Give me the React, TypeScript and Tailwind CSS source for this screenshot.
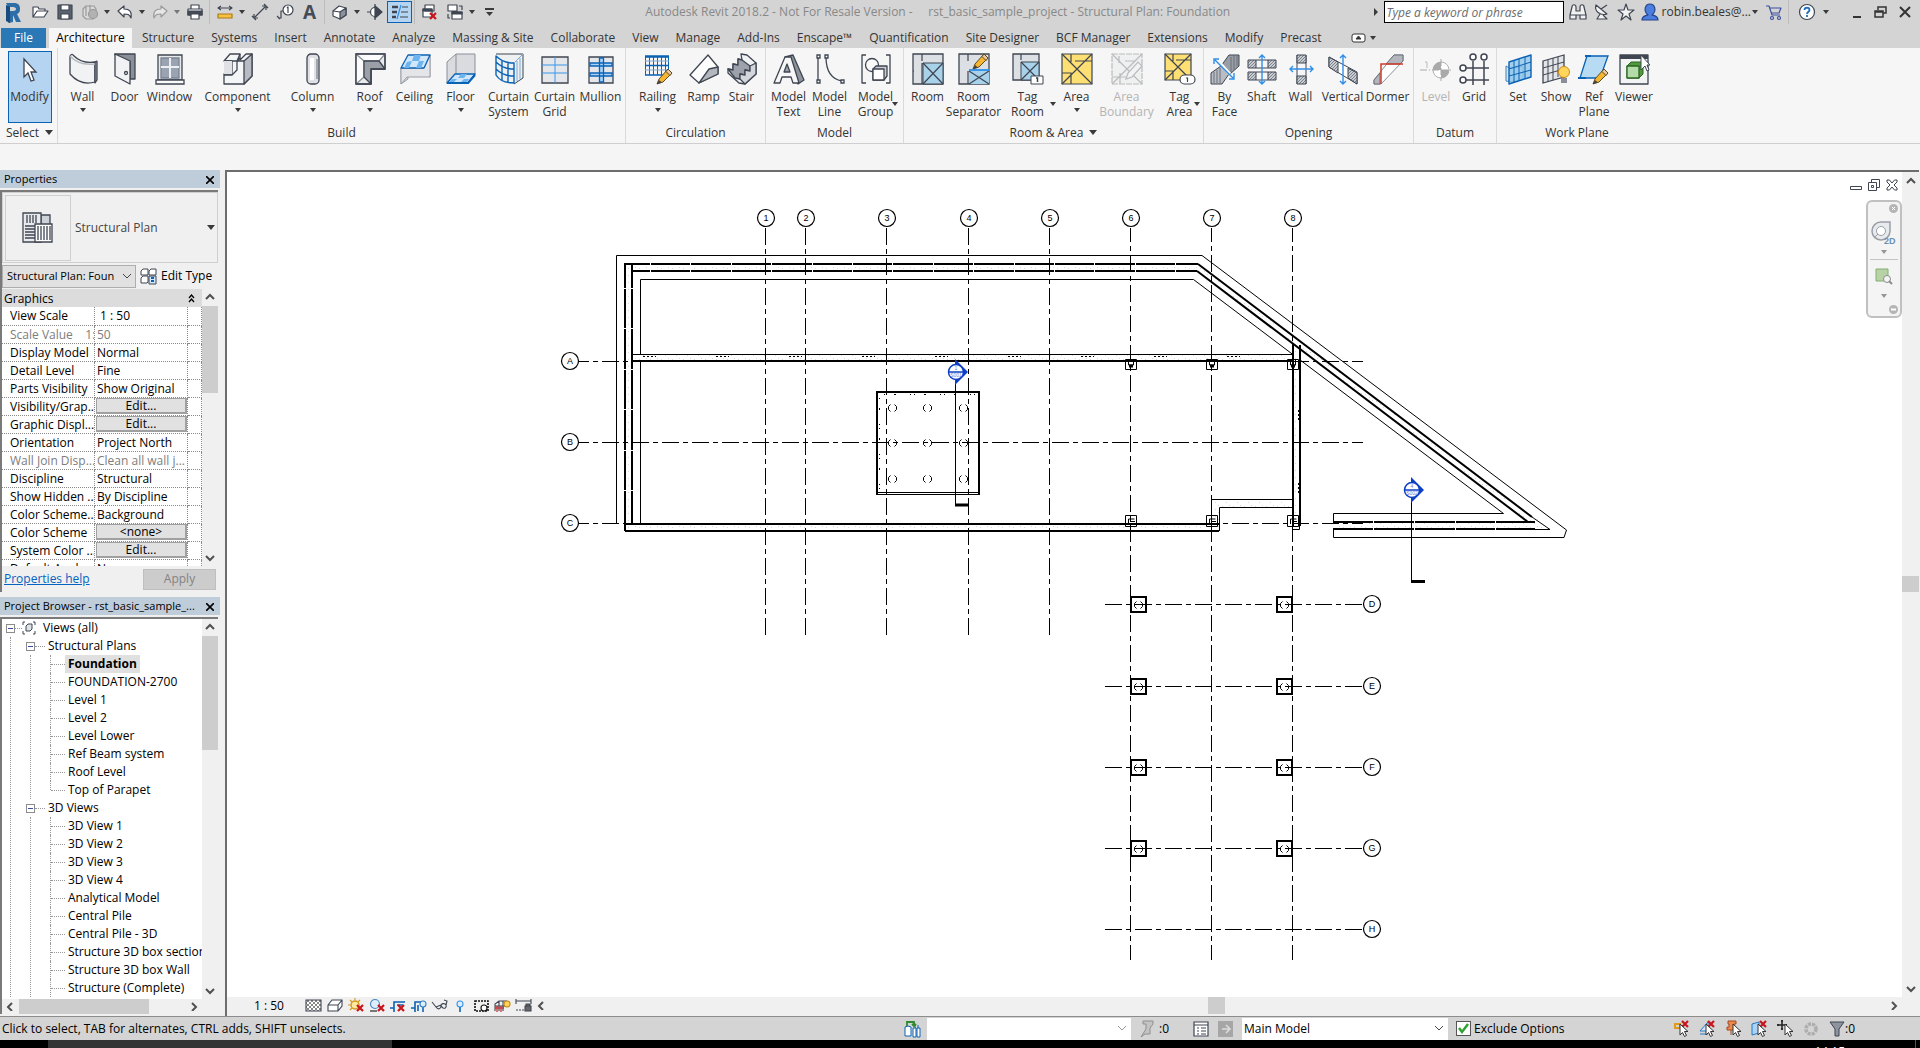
import React, { useState } from "react";

const INK = "#3f4652";
const BLUE = "#0a62b5";

// ---------- shared bits ----------

const Caret = ({ className = "" }: { className?: string }) => (
  <svg width="6" height="4" className={`fill-[#3a3a3a] ${className}`}>
    <path d="M0 0h6L3 4z" />
  </svg>
);

const WideCaret = () => (
  <svg width="8" height="5" className="fill-[#3a3a3a]">
    <path d="M0 0h8L4 5z" />
  </svg>
);

const Chevron = ({ dir }: { dir: "up" | "down" | "left" | "right" }) => {
  const d = {
    up: "M1 6l4-4 4 4",
    down: "M1 3l4 4 4-4",
    left: "M6 1L2 5l4 4",
    right: "M3 1l4 4-4 4",
  }[dir];
  return (
    <svg width="10" height="9" fill="none" stroke="#505050" strokeWidth="2">
      <path d={d} />
    </svg>
  );
};

const Pencil = ({ x, y }: { x: number; y: number }) => (
  <g transform={`translate(${x} ${y})`}>
    <path d="M0 15l2-5L11 0l4 4-9 9z" fill="#f6b52e" stroke="#5d4a22" />
    <path d="M9 2.500l4 4 2-2.500-4-4z" fill="#e9c7a0" stroke="#5d4a22" />
    <path d="M0 15l2-4 3 2.500z" fill="#444" />
  </g>
);

const RedCross = ({ x, y }: { x: number; y: number }) => (
  <path d={`M${x} ${y}l6 6m0-6l-6 6`} stroke="#c8141b" strokeWidth="2.200" />
);

const Cursor = ({ x, y }: { x: number; y: number }) => (
  <path
    transform={`translate(${x} ${y})`}
    d="M0 0v11l2.500-2.500 2 4 2-1-2-4H8z"
    fill="#fff"
    stroke="#333"
  />
);

const Hatched = ({ d }: { d: string }) => (
  <path d={d} fill="url(#hatch)" stroke={INK} />
);

// ---------- ribbon icons, 32x32 ----------

const icons: Record<string, React.ReactNode> = {
  modify: <path d="M10 6v18l4-4 3 8 3-1-3-8h5z" fill="#fff" stroke={INK} strokeWidth="1.300" />,
  wall: (
    <g stroke={INK} strokeWidth="1.300" strokeLinejoin="round">
      <path d="M3 3c2-3 3-1 4 0 6 6 14 7 21 6v20c-10 3-18 0-25-8z" fill="#f1f2f4" />
      <path d="M28 9c2-1 2-1 2 0v18l-2 3z" fill="#a9adb3" />
      <path d="M3 3c6 7 15 9 25 8" fill="none" stroke="#b5b8bd" />
    </g>
  ),
  door: (
    <g stroke={INK} strokeWidth="1.300" strokeLinejoin="round">
      <path d="M6 1h20v25h-5V9L6 2z" fill="#8b9098" />
      <path d="M6 1l15 7v23L6 23z" fill="#f1f2f4" />
      <circle cx="17" cy="20" r="1.500" fill="#fff" />
    </g>
  ),
  window: (
    <g stroke={INK} strokeWidth="1.300">
      <path d="M4 2h24v25H4z" fill="#e6e8ea" />
      <path d="M7 5h18v20H7z" fill="#9aa3b1" stroke="#7b8492" />
      <path d="M16 5v20M7 14h18" stroke="#eceef1" strokeWidth="2" />
      <path d="M2 27h28v4H2z" fill="#fbfbfb" />
    </g>
  ),
  component: (
    <g stroke={INK} strokeWidth="1.300" strokeLinejoin="round">
      <path d="M2 8l6-7h10v6l6-6h6v22l-8 8H2V21h8V8z" fill="#f4f5f6" />
      <path d="M22 31V8l8-7v22z" fill="#b8bcc2" />
      <path d="M2 8h13l3-3M15 8v9l-5 5H2M15 8h7M18 1l-3 7" fill="none" />
      <path d="M2 8h8v13H2z" fill="#dfe1e4" stroke="none" />
    </g>
  ),
  column: (
    <g>
      <rect x="10" y="1" width="12" height="30" rx="4" fill="#dfe1e4" stroke={INK} strokeWidth="1.300" />
      <path d="M15 5v22" stroke="#fff" strokeWidth="4" />
      <path d="M20 6v20" stroke="#a2a6ad" strokeWidth="2" />
    </g>
  ),
  roof: (
    <g stroke={INK} strokeWidth="1.300" strokeLinejoin="round">
      <path d="M2 1h29v15H17v15H2z" fill="#e9eaec" />
      <path d="M2 1l8 7v16l-8 7zM10 8h15l6-7H2z" fill="#fbfbfb" stroke="#8a8f97" />
      <path d="M10 24l7 7V16h14l-6-8H10z" fill="#9ba0a8" />
      <path d="M2 1h29v15H17v15H2z" fill="none" />
    </g>
  ),
  ceiling: (
    <g strokeLinejoin="round">
      <path d="M2 15v16l7-5V16l22 8V2" fill="#d5d8dc" stroke="#9a9ea5" />
      <path d="M2 15h23l6-13v22H8l-6 7z" fill="#e3e5e8" stroke="#9a9ea5" />
      <path d="M9 2h22l-6 13H2z" fill="#cfe6fb" stroke={BLUE} strokeWidth="1.300" />
      <path d="M15 2h7l-2 6h-7zM13 8l-3 7H5l3-6zM25 8l-3 7h-5l3-7z" fill="#6db3ee" />
    </g>
  ),
  floor: (
    <g strokeLinejoin="round">
      <path d="M2 9l9-8h19v21H10l-8 8z" fill="#d9dbde" stroke="#8b9098" />
      <path d="M11 1v20" stroke="#8b9098" />
      <path d="M10 21h20l-7 9H2z" fill="#cfe6fb" stroke={BLUE} strokeWidth="1.300" />
      <path d="M16 21h6l-3 4h-6zM12 26l-4 4H3l4-4zM24 26l-3 4h-6l4-4z" fill="#6db3ee" />
      <path d="M2 30h21l7-8" fill="none" stroke={BLUE} strokeWidth="2" />
    </g>
  ),
  curtainSystem: (
    <g fill="none" strokeLinejoin="round">
      <path d="M3 1h27v24l-9 6c-10 0-16-3-18-8z" fill="#eef0f2" />
      <path d="M3 1h27v24l-9 6" stroke={INK} />
      <path d="M3 3c6 6 12 7 18 7v20C12 30 6 27 3 22zM9 7v20M15 9v21M3 9c6 6 12 7 18 7M3 16c6 6 12 7 18 7" stroke={BLUE} strokeWidth="1.400" />
      <path d="M21 10l9-9M24 8v20M27 5v21" stroke="#7da9d6" />
    </g>
  ),
  curtainGrid: (
    <g fill="none">
      <path d="M3 4h26v26H3z" fill="#e4e6e9" stroke={INK} strokeWidth="1.300" />
      <path d="M16 4v26M3 12h26M3 20h26" stroke="#3b97ea" />
    </g>
  ),
  mullion: (
    <g>
      <path d="M4 4h24v26H4z" fill="#e4e6e9" stroke={INK} strokeWidth="1.300" />
      <path d="M5 10h22v3H5zM5 20h22v3H5zM14.500 5h4v24h-4z" fill="#a9d4f8" stroke={BLUE} strokeWidth="1.300" />
    </g>
  ),
  railing: (
    <g>
      <path d="M3 3.500h24" stroke={BLUE} strokeWidth="2.500" />
      <path d="M3 12.500h24M3 22h24" stroke={BLUE} strokeWidth="1.500" />
      <path d="M3.500 3v19M7.500 3v19M11.500 3v19M15.500 3v19M19.500 3v19M23.500 3v19M26.500 3v19" stroke={BLUE} />
      <path d="M3 8h24M3 17h24" stroke="#7da9d6" />
      <Pencil x={15} y={16} />
    </g>
  ),
  ramp: (
    <g stroke={INK} strokeWidth="1.300" strokeLinejoin="round">
      <path d="M2 22L20 2l10 12v7L11 30z" fill="#fdfdfd" />
      <path d="M11 30l10-14 9-2v7z" fill="#b3b7bd" />
    </g>
  ),
  stair: (
    <g stroke={INK} strokeWidth="1.300" strokeLinejoin="round">
      <path d="M15 1l6 1 9 8v11L19 31l-6-1-11-10v-4l5 1v-6l5 1V6l4 1z" fill="#f1f2f4" />
      <path d="M16 7l8 6v5l-5-1v5l-5-1v5l-5-1-7-9 5 1v-6l5 1V6z" fill="#9da2aa" />
      <path d="M24 13l6-3v11L19 31l-5-5v-5l5 1v-5l5 1z" fill="#d3d6da" />
    </g>
  ),
  modelText: (
    <g stroke={INK} strokeWidth="1.300" strokeLinejoin="round">
      <path d="M12 4l8-2 11 25-6 4-9-15z" fill="#8f949c" />
      <path d="M12 4h6l8 26h-6l-2-6H9l-2 6H1z" fill="#f7f7f8" />
      <path d="M14 11l-3 8h6z" fill="#9da2aa" />
    </g>
  ),
  modelLine: (
    <g fill="none" stroke={INK} strokeWidth="1.300">
      <path d="M4 4v24M12 4c0 14 5 22 16 24" />
      <path d="M3 2h3v3H3zM3 27h3v3H3zM11 2h3v3h-3zM27 27h3v3h-3z" fill="#fff" />
    </g>
  ),
  modelGroup: (
    <g stroke={INK} strokeWidth="1.300" strokeLinejoin="round">
      <path d="M6 2H2v28h4M26 2h4v28h-4" fill="none" />
      <circle cx="12" cy="12" r="6.500" fill="#fafafa" />
      <path d="M13 16l3-3h11v10l-3 4H13z" fill="#c8cbcf" />
      <path d="M13 16h11v11H13z" fill="#fff" />
    </g>
  ),
  room: (
    <g>
      <path d="M1 1h30v30H1z" fill="#dcdfe3" stroke={INK} strokeWidth="1.300" />
      <path d="M11 10h20v21H11z" fill="#a7d2ea" stroke={INK} />
      <path d="M10 1v7M1 18h1M10 10v21M11 10l20 21M31 10L11 31" stroke={INK} strokeWidth="1.200" />
    </g>
  ),
  roomSeparator: (
    <g>
      <path d="M1 1h30v30H1z" fill="#dcdfe3" stroke={INK} strokeWidth="1.300" />
      <path d="M11 18h20v13H11z" fill="#a7d2ea" />
      <path d="M10 1v7M10 18v13M11 18l20 13M31 18L11 31" stroke={INK} strokeWidth="1.200" />
      <path d="M11 17h20" stroke="#3b97ea" strokeWidth="2" />
      <Pencil x={15} y={1} />
    </g>
  ),
  tagRoom: (
    <g>
      <path d="M1 1h26v26H1z" fill="#dcdfe3" stroke={INK} strokeWidth="1.300" />
      <path d="M9 9h18v18H9z" fill="#a7d2ea" stroke={INK} />
      <path d="M9 1v6M9 9l18 18M27 9L9 27" stroke={INK} strokeWidth="1.200" />
      <path d="M19 23h12v8H19z" fill="#fff" stroke={INK} />
      <path d="M24 25h1.500v4" stroke={INK} strokeWidth="1.500" fill="none" />
    </g>
  ),
  area: (
    <g stroke={INK} strokeWidth="1.200">
      <path d="M1 1h30v30H1z" fill="#fddf73" />
      <path d="M1 1l30 30M31 1L1 31M10 1v8M1 20h9v11M14 8h17" fill="none" />
    </g>
  ),
  areaBoundary: (
    <g stroke="#b9bbbe" strokeWidth="1.200">
      <path d="M1 1h30v30H1z" fill="#eff0f0" strokeDasharray="6 1" />
      <path d="M1 1l30 30M31 1L1 31M8 3v7M1 24h14M9 20v11M14 8h10" fill="none" />
      <path d="M15 26l2-6 10-11 4 4-10 11z" fill="#f3f3f3" />
    </g>
  ),
  tagArea: (
    <g stroke={INK} strokeWidth="1.200">
      <path d="M1 1h26v26H1z" fill="#fddf73" />
      <path d="M1 1l26 26M27 1L1 27M9 1v7M1 18h8v9M12 7h15" fill="none" />
      <rect x="16" y="22" width="15" height="9" rx="4.500" fill="#fff" />
      <path d="M22 25h1.500v4" fill="none" />
    </g>
  ),
  byFace: (
    <g>
      <path d="M20 2h10v11L20 22l-8-9z" fill="#999ea6" stroke={INK} />
      <path d="M2 31V20l10-7 8 8-7 10z" fill="#b9bdc3" stroke={INK} />
      <path d="M22 4v15M25 3v14M28 3v10M5 19v11M8 17v13M11 15v15" stroke="#6a707a" />
      <path d="M11 12l9 10 2-2-9-10z" fill="#fff" />
      <path d="M6 7l18 18M5 11V6h5M25 20v6h-5" stroke="#2f8fe8" strokeWidth="1.400" fill="none" />
    </g>
  ),
  shaft: (
    <g>
      <Hatched d="M2 7h8v8H2zM22 7h8v8h-8zM2 19h8v8H2zM22 19h8v8h-8z" />
      <path d="M10 7h12M10 15h12M10 19h12M10 27h12" stroke={INK} />
      <path d="M16 2v29M13 5l3-3 3 3M13 28l3 3 3-3" stroke="#2f8fe8" strokeWidth="1.400" fill="none" />
    </g>
  ),
  wallOpening: (
    <g>
      <path d="M12 2v29M21 2v29" stroke={INK} />
      <Hatched d="M12 2h9v8h-9zM12 23h9v8h-9z" />
      <path d="M5 16h23M8 13l-3 3 3 3M25 13l3 3-3 3" stroke="#2f8fe8" strokeWidth="1.400" fill="none" />
    </g>
  ),
  vertical: (
    <g>
      <path d="M2 4l28 15v12L2 14z" fill="#fff" stroke={INK} />
      <Hatched d="M2 4l9 5v11l-9-6z" />
      <Hatched d="M21 15l9 5v11l-9-6z" />
      <path d="M16 2v29M13 5l3-3 3 3M13 28l3 3 3-3" stroke="#2f8fe8" strokeWidth="1.400" fill="none" />
    </g>
  ),
  dormer: (
    <g>
      <path d="M22 2h9v6L9 31H2v-4z" fill="#fff" stroke="#8a8f97" />
      <path d="M22 2h9v6l-3 3H14zM2 27l6-7v11H2z" fill="#b3b7bd" stroke="#6a707a" />
      <path d="M9 31V11h22" stroke="#d03a2b" strokeWidth="1.500" fill="none" />
    </g>
  ),
  level: (
    <g>
      <circle cx="21" cy="17" r="8" fill="#fff" stroke="#b0b0b0" />
      <path d="M21 17V9a8 8 0 00-8 8zM21 17v8a8 8 0 008-8z" fill="#aaa" />
      <path d="M0 17h10M12 17h19M21 6v22" stroke="#aaa" strokeDasharray="7 2" />
      <path d="M5 9h2v6" stroke="#bbb" fill="none" />
    </g>
  ),
  grid: (
    <g fill="#fff" stroke={INK} strokeWidth="1.500">
      <path d="M15 8v24M26 8v24M8 15h23M8 27h23" />
      <circle cx="15" cy="4" r="3" />
      <circle cx="26" cy="4" r="3" />
      <circle cx="5" cy="15" r="3" />
      <circle cx="5" cy="27" r="3" />
    </g>
  ),
  set: (
    <g fill="none" strokeLinejoin="round">
      <path d="M4 13c4 3 12 2 17 0v13c-5 3-13 3-17 2z" fill="#cfe6f5" stroke="#4680b5" />
      <path d="M7 9l22-7v22L7 31z" fill="#8fc6ea" fillOpacity="0.8" stroke={BLUE} strokeWidth="1.400" />
      <path d="M12 8v22M17 6v22M23 4v22M7 16l22-7M7 23l22-6" stroke={BLUE} />
    </g>
  ),
  show: (
    <g fill="none">
      <path d="M3 8l21-6v22L3 30z" fill="#e3e5e8" stroke={INK} strokeWidth="1.300" />
      <path d="M8 7v22M13 5v22M18 4v20M3 15l21-6M3 22l21-6" stroke={INK} />
      <circle cx="24" cy="19" r="5.500" fill="#ffd659" stroke="#c88a1a" />
      <path d="M21 25h6v5h-6z" fill="#8a8f97" />
    </g>
  ),
  refPlane: (
    <g>
      <path d="M9 3h21l-8 22H2z" fill="#b7dbf3" stroke={BLUE} strokeWidth="1.300" />
      <path d="M0 25h8M7 3h6" stroke={BLUE} strokeWidth="2" />
      <Pencil x={15} y={16} />
    </g>
  ),
  viewer: (
    <g strokeLinejoin="round">
      <path d="M2 2h28v29H2z" fill="#f2f3f4" stroke={INK} strokeWidth="1.300" />
      <path d="M2 2h28v4H2z" fill={INK} />
      <path d="M9 13l4-4h12v12l-4 4H9z" fill="#4e9a3d" stroke="#2b6420" />
      <path d="M9 13h12v12H9z" fill="#b4dca8" stroke="#2b6420" strokeWidth="1.300" />
      <path d="M23 2v15l4-4 2 5 2-1-2-5h3z" fill="#fff" stroke={INK} />
    </g>
  ),
};

type Tool = {
  icon: string;
  label: string[];
  width: string;
  arrow?: "below" | "side";
  disabled?: boolean;
};

const panels: {
  title: string;
  arrow?: boolean;
  width: string;
  tools: Tool[];
}[] = [
  {
    title: "Build",
    width: "w-[568px]",
    tools: [
      { icon: "wall", label: ["Wall"], width: "w-12", arrow: "below" },
      { icon: "door", label: ["Door"], width: "w-9" },
      { icon: "window", label: ["Window"], width: "w-[54px]" },
      { icon: "component", label: ["Component"], width: "w-[82px]", arrow: "below" },
      { icon: "column", label: ["Column"], width: "w-[68px]", arrow: "below" },
      { icon: "roof", label: ["Roof"], width: "w-[46px]", arrow: "below" },
      { icon: "ceiling", label: ["Ceiling"], width: "w-11" },
      { icon: "floor", label: ["Floor"], width: "w-12", arrow: "below" },
      { icon: "curtainSystem", label: ["Curtain", "System"], width: "w-12" },
      { icon: "curtainGrid", label: ["Curtain", "Grid"], width: "w-11" },
      { icon: "mullion", label: ["Mullion"], width: "w-12" },
    ],
  },
  {
    title: "Circulation",
    width: "w-[140px]",
    tools: [
      { icon: "railing", label: ["Railing"], width: "w-11", arrow: "below" },
      { icon: "ramp", label: ["Ramp"], width: "w-12" },
      { icon: "stair", label: ["Stair"], width: "w-7" },
    ],
  },
  {
    title: "Model",
    width: "w-[138px]",
    tools: [
      { icon: "modelText", label: ["Model", "Text"], width: "w-[38px]" },
      { icon: "modelLine", label: ["Model", "Line"], width: "w-11" },
      { icon: "modelGroup", label: ["Model", "Group"], width: "w-12", arrow: "side" },
    ],
  },
  {
    title: "Room & Area",
    arrow: true,
    width: "w-[300px]",
    tools: [
      { icon: "room", label: ["Room"], width: "w-11" },
      { icon: "roomSeparator", label: ["Room", "Separator"], width: "w-12" },
      { icon: "tagRoom", label: ["Tag", "Room"], width: "w-[60px]", arrow: "side" },
      { icon: "area", label: ["Area"], width: "w-[38px]", arrow: "below" },
      { icon: "areaBoundary", label: ["Area", "Boundary"], width: "w-[62px]", disabled: true },
      { icon: "tagArea", label: ["Tag", "Area"], width: "w-11", arrow: "side" },
    ],
  },
  {
    title: "Opening",
    width: "w-[210px]",
    tools: [
      { icon: "byFace", label: ["By", "Face"], width: "w-[38px]" },
      { icon: "shaft", label: ["Shaft"], width: "w-9" },
      { icon: "wallOpening", label: ["Wall"], width: "w-[42px]" },
      { icon: "vertical", label: ["Vertical"], width: "w-[42px]" },
      { icon: "dormer", label: ["Dormer"], width: "w-12" },
    ],
  },
  {
    title: "Datum",
    width: "w-[83px]",
    tools: [
      { icon: "level", label: ["Level"], width: "w-[38px]", disabled: true },
      { icon: "grid", label: ["Grid"], width: "w-[38px]" },
    ],
  },
  {
    title: "Work Plane",
    width: "w-[160px]",
    tools: [
      { icon: "set", label: ["Set"], width: "w-[38px]" },
      { icon: "show", label: ["Show"], width: "w-[38px]" },
      { icon: "refPlane", label: ["Ref", "Plane"], width: "w-[38px]" },
      { icon: "viewer", label: ["Viewer"], width: "w-[42px]" },
    ],
  },
];

const ToolButton = ({ tool }: { tool: Tool }) => (
  <button
    disabled={tool.disabled}
    className={`relative flex h-[72px] shrink-0 flex-col items-center pt-[2px] leading-[15px] whitespace-nowrap ${tool.width} ${
      tool.disabled ? "text-[#b4b4b4]" : "text-[#333]"
    }`}
  >
    <svg width="32" height="32" fill="none">
      {icons[tool.icon]}
    </svg>
    <span className="mt-1 flex flex-col items-center">
      {tool.label.map((line) => (
        <span key={line}>{line}</span>
      ))}
    </span>
    {tool.arrow === "below" && <Caret className="mt-1" />}
    {tool.arrow === "side" && <Caret className="absolute right-[2px] bottom-[17px]" />}
  </button>
);

// ---------- title bar ----------

const Small = ({ children }: { children: React.ReactNode }) => (
  <svg width="18" height="18" fill="none" stroke={INK} strokeWidth="1.200" strokeLinejoin="round">
    {children}
  </svg>
);

const Divider = () => <span className="mx-[2px] h-6 w-px bg-[#bcbcbc]" />;

const QuickButton = ({
  label,
  narrow,
  active,
  children,
}: {
  label: string;
  narrow?: boolean;
  active?: boolean;
  children: React.ReactNode;
}) => (
  <button
    aria-label={label}
    className={`flex h-[22px] shrink-0 items-center justify-center ${
      narrow ? "w-[10px]" : "w-[25px]"
    } ${active ? "border border-[#0a62b5] bg-[#b5d4f1]" : ""}`}
  >
    {children}
  </button>
);

const QuickAccess = () => (
  <div className="flex items-center">
    <QuickButton label="Revit">
      <svg width="16" height="21">
        <path d="M1 1h8c4 0 6 2 6 6 0 3-1 4-3 5l4 8h-5l-3-7v7l-4 1-1-1V5z" fill="#2d6da8" />
        <path d="M5 5h3c2 0 3 1 3 2s-1 2-3 2H5z" fill="#d4d4d4" />
        <path d="M1 3l4 2v16l-4-2z" fill="#174b7d" />
      </svg>
    </QuickButton>
    <span className="w-[2px]" />
    <QuickButton label="Open">
      <Small>
        <path d="M2 14V4h5l1 2h6v2M2 14l4-6h11l-4 6z" fill="#fff" />
      </Small>
    </QuickButton>
    <QuickButton label="Save">
      <Small>
        <path d="M2 2h14v14H2z" fill="#5a6270" />
        <path d="M5 2h8v5H5zM5 11h8v5H5z" fill="#fff" />
      </Small>
    </QuickButton>
    <QuickButton label="Synchronize">
      <Small>
        <g stroke="#9a9a9a">
          <path d="M2 6l3-3h8l2 3v7l-3 3H5l-3-3z" fill="#d9d9d9" />
          <circle cx="12" cy="11" r="4.500" fill="#b2b2b2" />
          <path d="M5 3v10M9 2v6" />
        </g>
      </Small>
    </QuickButton>
    <QuickButton label="Synchronize options" narrow><Caret /></QuickButton>
    <QuickButton label="Undo">
      <Small>
        <path d="M2 8l6-5v3c6 0 8 3 7 9-2-4-3-4-7-4v3z" fill="#fff" />
      </Small>
    </QuickButton>
    <QuickButton label="Undo list" narrow><Caret /></QuickButton>
    <QuickButton label="Redo">
      <Small>
        <path d="M16 8l-6-5v3c-6 0-8 3-7 9 2-4 3-4 7-4v3z" fill="#e6e6e6" stroke="#9a9a9a" />
      </Small>
    </QuickButton>
    <QuickButton label="Redo list" narrow><Caret className="opacity-60" /></QuickButton>
    <QuickButton label="Print">
      <Small>
        <path d="M5 6V2h8v4M2 6h14v6H2z" fill="#fff" />
        <path d="M2 8h14v4H2z" fill="#444b57" />
        <path d="M5 11h8v5H5z" fill="#fff" />
      </Small>
    </QuickButton>
    <Divider />
    <QuickButton label="Measure">
      <Small>
        <path d="M2 5h14M5 3L2 5l3 2M13 3l3 2-3 2" />
        <path d="M2 11h14v4H2z" fill="#f4c243" stroke="#b07a10" />
      </Small>
    </QuickButton>
    <QuickButton label="Measure options" narrow><Caret /></QuickButton>
    <QuickButton label="Aligned dimension">
      <Small>
        <path d="M4 14L14 4M3 11v4h4M11 3h4v4M1 13l4 4M13 1l4 4" />
      </Small>
    </QuickButton>
    <QuickButton label="Tag by category">
      <Small>
        <path d="M2 15h3V8h4M1 13l3 3" />
        <circle cx="12" cy="7" r="5" fill="#fff" />
        <path d="M11 5l1-1v6" />
      </Small>
    </QuickButton>
    <QuickButton label="Text">
      <span className="text-[19px] leading-5 font-bold text-[#454b56]">A</span>
    </QuickButton>
    <Divider />
    <QuickButton label="Default 3D view">
      <Small>
        <path d="M2 8l6-5 7 2v7l-6 4-7-3z" fill="#fff" />
        <path d="M9 9l6-4v7l-6 4z" fill="#8b919b" />
        <path d="M2 8l7 1" />
      </Small>
    </QuickButton>
    <QuickButton label="3D view list" narrow><Caret /></QuickButton>
    <QuickButton label="Section">
      <Small>
        <path d="M9 1v3M9 14v3M1 9h3" />
        <circle cx="9" cy="9" r="4.500" fill="#fff" />
        <path d="M9 3l7 6-7 6z" fill={INK} />
      </Small>
    </QuickButton>
    <QuickButton label="Thin lines" active>
      <Small>
        <path d="M1 4h6M1 9h5M1 14h4" strokeWidth="2.400" />
        <path d="M11 4h6M10 9h7M9 14h8" />
        <path d="M10 2L6 16" stroke="#2f8fe8" />
      </Small>
    </QuickButton>
    <Divider />
    <QuickButton label="Close hidden windows">
      <Small>
        <path d="M4 2h9v6H4zM2 6h9v8H2z" fill="#fff" />
        <path d="M2 6h9v2H2z" fill={INK} />
        <RedCross x={9} y={10} />
      </Small>
    </QuickButton>
    <QuickButton label="Switch windows">
      <Small>
        <path d="M2 2h9v6H2zM6 9h10v7H6z" fill="#fff" />
        <path d="M6 9h10v2H6z" fill={INK} />
        <path d="M13 3h3v4M2 11v4h2" />
      </Small>
    </QuickButton>
    <QuickButton label="Window list" narrow><Caret /></QuickButton>
    <QuickButton label="Customize quick access">
      <svg width="9" height="9" fill="#3a3a3a">
        <path d="M0 0h9v2H0zM1 4h7L4.500 8z" />
      </svg>
    </QuickButton>
  </div>
);

const InfoCenter = () => (
  <div className="flex items-center pr-[3px] text-[#333]">
    <svg width="5" height="8" className="mr-[5px] fill-[#3a3a3a]"><path d="M0 0l4 4-4 4z" /></svg>
    <input
      aria-label="Search help"
      placeholder="Type a keyword or phrase"
      className="mr-[2px] h-[22px] w-[180px] border border-black bg-white px-[2px] italic outline-none placeholder:text-[#6b6b6b]"
    />
    <button aria-label="Search" className="flex w-6 justify-center">
      <Small>
        <path d="M3 4c0-3 4-3 4 0v4h4V4c0-3 4-3 4 0l2 8H1zM1 12h6v4H1zM11 12h6v4h-6z" fill="#f2f2f2" />
      </Small>
    </button>
    <button aria-label="Subscription center" className="flex w-6 justify-center">
      <Small>
        <path d="M3 2c-2 6 4 11 11 9zM8 6l6-4M7 11l-3 5h10l-4-4" fill="#f2f2f2" />
      </Small>
    </button>
    <button aria-label="Favorites" className="flex w-6 justify-center">
      <Small>
        <path d="M9 1l2 6h6l-5 4 2 6-5-4-5 4 2-6-5-4h6z" fill="#f2f2f2" />
      </Small>
    </button>
    <button className="flex items-center">
      <span className="flex w-6 justify-center">
        <Small>
          <path d="M1 17c0-4 3-4 6-5-5-4-3-11 2-11s7 7 2 11c3 1 6 1 6 5z" fill="#4a7fe0" stroke="#26428b" />
        </Small>
      </span>
      <span className="whitespace-nowrap">robin.beales@...</span>
      <Caret className="mr-1 ml-px" />
    </button>
    <button aria-label="App store" className="flex w-6 justify-center">
      <Small>
        <path d="M1 3h3l3 9h8M5 5h11l-2 5H6" stroke="#3c4fa0" />
        <circle cx="7" cy="15" r="1.500" stroke="#3c4fa0" />
        <circle cx="14" cy="15" r="1.500" stroke="#3c4fa0" />
      </Small>
    </button>
    <Divider />
    <button aria-label="Help" className="flex w-8 justify-center">
      <svg width="18" height="18" fill="none">
        <circle cx="9" cy="9" r="7.500" fill="#fff" stroke={INK} strokeWidth="1.200" />
        <path d="M6.500 7c0-3 5-3 5 0 0 2-2.500 2-2.500 4M9 12v2" stroke="#1f6fc4" strokeWidth="1.800" />
      </svg>
    </button>
    <Caret className="mr-4" />
    <button aria-label="Minimize" className="flex w-6 justify-center">
      <svg width="10" height="14"><path d="M1 11h8v2H1z" fill="#333" /></svg>
    </button>
    <button aria-label="Restore" className="flex w-6 justify-center">
      <svg width="14" height="14" fill="none" stroke="#333" strokeWidth="1.500">
        <path d="M4 5V2h8v6H9M1 6h8v6H1zM1 7h8" />
      </svg>
    </button>
    <button aria-label="Close" className="flex w-6 justify-center">
      <svg width="12" height="12" stroke="#333" strokeWidth="2"><path d="M1 1l10 10M11 1L1 11" /></svg>
    </button>
  </div>
);

const tabs = [
  "Structure",
  "Systems",
  "Insert",
  "Annotate",
  "Analyze",
  "Massing & Site",
  "Collaborate",
  "View",
  "Manage",
  "Add-Ins",
  "Enscape™",
  "Quantification",
  "Site Designer",
  "BCF Manager",
  "Extensions",
  "Modify",
  "Precast",
];

// ---------- palettes ----------

type Row = { name: string; value: string; muted?: boolean; button?: boolean };

const rows: Row[] = [
  { name: "View Scale", value: " 1 : 50" },
  { name: "Scale Value    1:", value: "50", muted: true },
  { name: "Display Model", value: "Normal" },
  { name: "Detail Level", value: "Fine" },
  { name: "Parts Visibility", value: "Show Original" },
  { name: "Visibility/Grap...", value: "Edit...", button: true },
  { name: "Graphic Displ...", value: "Edit...", button: true },
  { name: "Orientation", value: "Project North" },
  { name: "Wall Join Disp...", value: "Clean all wall j...", muted: true },
  { name: "Discipline", value: "Structural" },
  { name: "Show Hidden ...", value: "By Discipline" },
  { name: "Color Scheme...", value: "Background" },
  { name: "Color Scheme", value: "<none>", button: true },
  { name: "System Color ...", value: "Edit...", button: true },
  { name: "Default Analy...", value: "None" },
];

const PaletteHeader = ({ title }: { title: string }) => (
  <div className="flex h-[18px] shrink-0 items-center justify-between bg-[#bfcddb] pt-px pr-[6px] pl-1">
    <h2 className="text-[11px] whitespace-nowrap">{title}</h2>
    <button aria-label={`Close ${title}`}>
      <svg width="8" height="8" stroke="#000" strokeWidth="1.600"><path d="M0 0l8 8M8 0L0 8" /></svg>
    </button>
  </div>
);

const PropertiesPalette = () => (
  <section className="shrink-0 pb-[5px]">
    <PaletteHeader title="Properties" />
    <div className="mt-[2px] mr-[2px] border-t-2 border-l-2 border-[#7a7a7a]">
      <div className="flex h-[71px] items-center border border-[#cfcfcf] pl-[2px]">
        <div className="flex size-[66px] items-center justify-center border border-[#cfcfcf]">
          <svg width="32" height="32" fill="#fff" stroke={INK} strokeWidth="1.300">
            <path d="M19 3h9v12h-9z" fill="#cdd1d8" />
            <path d="M1 1h18v29H1z" fill="#e8eaed" />
            <path d="M5 3v8M8 3v8M11 3v8M14 3v8M3 14h10M3 17h10M3 20h10M3 23h10M3 26h10" />
            <path d="M13 12h17v18H13z" />
            <path d="M16 14v14M19 14v14M22 14v14M25 14v14M28 14v14" />
          </svg>
        </div>
        <button className="flex grow items-center justify-between pr-[2px] pl-1 text-[#444]">
          Structural Plan
          <WideCaret />
        </button>
      </div>
      <div className="flex h-[26px] items-center gap-1">
        <label className="relative block">
          <span className="sr-only">Element filter</span>
          <select className="block h-[23px] w-[134px] appearance-none border border-[#adadad] bg-[#e1e1e1] pl-1 text-[11px] outline-none">
            <option>Structural Plan: Foun</option>
          </select>
          <svg width="9" height="6" fill="none" stroke="#444" className="absolute top-[9px] right-[4px]">
            <path d="M0 0l4 4 4-4" />
          </svg>
        </label>
        <button className="flex items-center gap-1 whitespace-nowrap">
          <svg width="17" height="17" fill="#fff" stroke={INK}>
            <path d="M1 3l2-2h5v6H1zM9 3l2-2h5v6H9zM1 10l2-2h5v6l-1 1H1z" />
            <path d="M9 8h7v8H9z" fill="#d6e8f8" />
            <path d="M11 10h3M11 13h3" stroke={BLUE} strokeWidth="2" />
          </svg>
          Edit Type
        </button>
      </div>
      <div className="flex h-[277px]">
        <div className="min-w-0 grow overflow-hidden bg-white">
          <table className="w-full table-fixed border-collapse leading-[17px]">
            <colgroup>
              <col />
              <col className="w-[93px]" />
              <col className="w-[14px]" />
            </colgroup>
            <thead>
              <tr className="h-[18px] bg-[#dcdcdc]">
                <th colSpan={2} className="pl-[2px] text-left font-normal">Graphics</th>
                <th className="font-normal">
                  <button aria-label="Collapse Graphics" className="block">
                    <svg width="7" height="9" fill="none" stroke="#000" strokeWidth="1.300">
                      <path d="M1 4l2.500-3L6 4M1 8l2.500-3L6 8" />
                    </svg>
                  </button>
                </th>
              </tr>
            </thead>
            <tbody>
              {rows.map((row) => (
                <tr key={row.name} className={row.muted ? "text-[#7d7d7d]" : ""}>
                  <td className="h-[18px] overflow-hidden border-r border-b border-dotted border-[#8a8a8a] p-0 pl-2 whitespace-pre">
                    {row.name}
                  </td>
                  <td className="border-r border-b border-dotted border-[#8a8a8a] p-0 whitespace-pre">
                    {row.button ? (
                      <button className="ml-px block h-4 w-[91px] border border-r-2 border-b-2 border-[#a0a0a0] bg-[#e1e1e1] leading-[13px]">
                        {row.value}
                      </button>
                    ) : (
                      <span className="pl-[2px]">{row.value}</span>
                    )}
                  </td>
                  <td className="border-r border-b border-dotted border-[#8a8a8a] p-0" />
                </tr>
              ))}
            </tbody>
          </table>
        </div>
        <div className="flex w-4 shrink-0 flex-col items-center bg-[#f0f0f0]">
          <button aria-label="Scroll up" className="flex h-[17px] shrink-0 items-center"><Chevron dir="up" /></button>
          <div className="h-[87px] w-full bg-[#cdcdcd]" />
          <button aria-label="Scroll down" className="mt-auto flex h-[17px] items-center"><Chevron dir="down" /></button>
        </div>
      </div>
      <div className="flex h-[26px] items-center justify-between pr-[2px] pl-[2px]">
        <a href="#help" className="text-[#0563c1] underline">Properties help</a>
        <button disabled className="h-[21px] w-[73px] border border-[#bfbfbf] bg-[#cccccc] text-[#838383]">Apply</button>
      </div>
    </div>
  </section>
);

const tree = [
  {
    name: "Structural Plans",
    views: [
      "Foundation",
      "FOUNDATION-2700",
      "Level 1",
      "Level 2",
      "Level Lower",
      "Ref Beam system",
      "Roof Level",
      "Top of Parapet",
    ],
  },
  {
    name: "3D Views",
    views: [
      "3D View 1",
      "3D View 2",
      "3D View 3",
      "3D View 4",
      "Analytical Model",
      "Central Pile",
      "Central Pile - 3D",
      "Structure 3D box section (",
      "Structure 3D box Wall",
      "Structure (Complete)",
    ],
  },
];

const Expander = () => (
  <button aria-label="Collapse" className="flex size-[9px] shrink-0 items-center justify-center border border-[#8c8c8c] bg-white">
    <span className="h-px w-[5px] bg-[#3b4fa0]" />
  </button>
);

const ProjectBrowser = () => {
  const [current, setCurrent] = useState("Foundation");
  return (
    <section className="flex min-h-0 grow flex-col pb-[2px]">
      <PaletteHeader title="Project Browser - rst_basic_sample_..." />
      <div className="mt-[2px] mr-[2px] flex min-h-0 grow flex-col border-t-2 border-l-2 border-[#7a7a7a]">
        <div className="flex min-h-0 grow">
          <ul className="min-w-0 grow overflow-hidden bg-white leading-[18px] whitespace-nowrap">
            <li>
              <div className="flex h-[18px] items-center pl-1">
                <Expander />
                <span className="w-[7px] border-t border-dotted border-[#999]" />
                <svg width="14" height="14" fill="none" stroke={INK}>
                  <path d="M3 1H1v3M11 1h2v3M3 13H1v-3M11 13h2v-3" />
                  <path d="M4 5l2-2h4v5l-2 2H4z" fill="#dfe2e6" />
                </svg>
                <span className="pl-[7px]">Views (all)</span>
              </div>
              <ul className="ml-2 border-l border-dotted border-[#999]">
                {tree.map((group, index) => (
                  <li key={group.name}>
                    <div className="flex h-[18px] items-center pl-[15px]">
                      <Expander />
                      <span className="w-[10px] border-t border-dotted border-[#999]" />
                      <span className="pl-[3px]">{group.name}</span>
                    </div>
                    <ul className="ml-[19px] border-l border-dotted border-[#999]">
                      {group.views.map((view, i) => (
                        <li key={view} className="flex h-[18px] pl-[19px]">
                          <span
                            className={`w-[15px] shrink-0 border-l border-dotted border-[#999] ${
                              index === 0 && i === group.views.length - 1 ? "h-[9px]" : ""
                            }`}
                          >
                            <span className="mt-[9px] block border-t border-dotted border-[#999]" />
                          </span>
                          <button
                            onClick={() => setCurrent(view)}
                            className={`px-[3px] ${current === view ? "bg-[#e0e0e0] font-bold" : ""}`}
                          >
                            {view}
                          </button>
                        </li>
                      ))}
                    </ul>
                  </li>
                ))}
              </ul>
            </li>
          </ul>
          <div className="flex w-4 shrink-0 flex-col items-center bg-[#f0f0f0]">
            <button aria-label="Scroll up" className="flex h-[17px] shrink-0 items-center"><Chevron dir="up" /></button>
            <div className="h-[114px] w-full bg-[#cdcdcd]" />
            <button aria-label="Scroll down" className="mt-auto flex h-[17px] items-center"><Chevron dir="down" /></button>
          </div>
        </div>
        <div className="mr-4 flex h-[15px] shrink-0 items-center bg-[#f0f0f0]">
          <button aria-label="Scroll left" className="flex w-[17px] justify-center"><Chevron dir="left" /></button>
          <div className="h-full w-[130px] bg-[#cdcdcd]" />
          <button aria-label="Scroll right" className="ml-auto flex w-[17px] justify-center"><Chevron dir="right" /></button>
        </div>
      </div>
    </section>
  );
};

// ---------- drawing ----------

const topGrids = [
  { label: "1", x: 765, end: 636 },
  { label: "2", x: 805, end: 636 },
  { label: "3", x: 886, end: 636 },
  { label: "4", x: 968, end: 636 },
  { label: "5", x: 1049, end: 636 },
  { label: "6", x: 1130, end: 960 },
  { label: "7", x: 1211, end: 960 },
  { label: "8", x: 1292, end: 960 },
];

const leftGrids = [
  { label: "A", y: 361 },
  { label: "B", y: 442 },
  { label: "C", y: 523 },
];

const rightGrids = [
  { label: "D", y: 604 },
  { label: "E", y: 686 },
  { label: "F", y: 767 },
  { label: "G", y: 848 },
  { label: "H", y: 929 },
];

const Bubble = ({ x, y, label }: { x: number; y: number; label: string }) => (
  <g>
    <circle cx={x} cy={y} r="8.500" fill="#fff" stroke="#000" strokeWidth="1.200" />
    <text x={x} y={y + 3} textAnchor="middle" className="fill-black font-['Liberation_Sans'] text-[9px]">
      {label}
    </text>
  </g>
);

const Pile = ({ x, y }: { x: number; y: number }) => (
  <path
    d={`M${x - 2} ${y - 3}l-2 2v3l2 2M${x + 2} ${y - 3}l2 2v3l-2 2`}
    fill="none"
    stroke="#000"
  />
);

const SectionMark = ({ x, y, label, sheet }: { x: number; y: number; label: string; sheet: string }) => (
  <g>
    <path d={`M${x - 1} ${y - 13}l13 13-13 13z`} fill="#0b3fc4" />
    <circle cx={x} cy={y} r="7.500" fill="#fff" stroke="#0b3fc4" strokeWidth="1.500" />
    <path d={`M${x - 8} ${y}h17`} stroke="#0b3fc4" strokeWidth="1.500" />
    <text x={x} y={y - 2} textAnchor="middle" className="fill-[#5f86e0] font-['Liberation_Sans'] text-[5px]">{label}</text>
    <text x={x} y={y + 5} textAnchor="middle" className="fill-[#5f86e0] font-['Liberation_Sans'] text-[5px]">{sheet}</text>
  </g>
);

const ticksX = Array.from({ length: 14 }, (_, i) => 650 + Math.round(i * 40.4));
const ticksY = Array.from({ length: 6 }, (_, i) => 288 + Math.round(i * 40.4));
const dotsX = Array.from({ length: 9 }, (_, i) => 643 + i * 73);

const FloorPlan = () => (
  <svg className="block h-full w-full" role="img" aria-label="Foundation plan">
    <g transform="translate(-227 -172)" fill="none" stroke="#000">
      {/* footing outline */}
      <path d="M616.500 523V255.500H1202L1566.500 530 1564 537.500H1333.500V513.500H1503.500L1193.500 279.500H640.500V523" />
      {/* perimeter walls */}
      <g fill="url(#concrete)" stroke="none">
        <path d="M625 264h574l351 265h-217v-7h195L1197 271H632v253h587v7H625z" />
        <path d="M632 354h660v7H632zM1293 343h7v186h-7zM1211 499h81v8h-73v17h-8z" />
      </g>
      <g strokeWidth="2">
        <path d="M625 531V264H1198M632 523V264M632 271H1197M1198 264L1532 517M1197 271L1528 522M1333 522H1535M1333 529H1535" />
        <path d="M632 361H1292M625 524H1219M625 531H1219M1293 343V526M1300 345V526" />
      </g>
      <path d="M632 354.500H1292M1219.500 531V507.500H1292M1211 499.500H1292M1211.500 499V523M1293 529.500h6.500V525M1532 517L1550 529.500H1535" />
      <g stroke="#fff">
        {ticksX.map((x) => (
          <path key={x} d={`M${x + 0.5} 263v9`} />
        ))}
        {ticksY.map((y) => (
          <path key={y} d={`M624 ${y + 0.5}h9`} />
        ))}
        <path d="M1373.500 521v9M1414.500 521v9M1455.500 521v9M1495.500 521v9" />
      </g>
      {dotsX.map((x) => (
        <path key={x} d={`M${x} 356.500h13`} strokeDasharray="2 2" />
      ))}
      <path d="M1298.500 410v12M1298.500 483v12" strokeDasharray="2 2" />

      {/* grid lines */}
      <g strokeDasharray="17 4 5 4">
        {topGrids.map((g) => (
          <path key={g.label} d={`M${g.x + 0.5} 228V${g.end}`} strokeDashoffset={g.x > 1100 ? 3 : 0} />
        ))}
        {leftGrids.map((g) => (
          <path key={g.label} d={`M579 ${g.y + 0.5}H1363`} strokeDashoffset="7" />
        ))}
        {rightGrids.map((g) => (
          <path key={g.label} d={`M1105 ${g.y + 0.5}H1362`} />
        ))}
      </g>
      {/* pit slab */}
      <path d="M877 494V392H979V494" strokeWidth="2" />
      <path d="M876 494.500H980M878 492.500H978" />
      <path d="M879.500 398V490M884 394.500H975" strokeDasharray="1 9 2 14 1 3" />
      {[407, 442, 478].map((y) =>
        [892, 927, 963].map((x) => <Pile key={`${x}-${y}`} x={x + 0.5} y={y + 0.5} />)
      )}

      {/* column footings */}
      {[1125, 1206, 1287].map((x) => (
        <g key={x}>
          <path d={`M${x + 0.5} 359.500h11v10h-11zM${x + 3.5} 360v5h5v-5`} />
          <path d={`M${x + 4} 366h4`} strokeWidth="3" />
          <path d={`M${x + 0.5} 526.500v-11h11v11zM${x + 3.5} 524v-5h6M${x + 5} 521.500h5`} />
        </g>
      ))}
      {rightGrids.slice(0, 4).map((g) =>
        [1131, 1277].map((x) => (
          <g key={`${x}-${g.label}`}>
            <rect x={x} y={g.y - 7} width="15" height="15" strokeWidth="2" />
            <Pile x={x + 7.5} y={g.y + 0.5} />
          </g>
        ))
      )}

      {/* section lines */}
      <path d="M955.500 383V504M1411.500 501V582" />
      <path d="M955 505H968M1411 581.500H1425" strokeWidth="3" />

      <g stroke="none">
        {topGrids.map((g) => (
          <Bubble key={g.label} x={g.x + 1} y={218} label={g.label} />
        ))}
        {leftGrids.map((g) => (
          <Bubble key={g.label} x={570} y={g.y} label={g.label} />
        ))}
        {rightGrids.map((g) => (
          <Bubble key={g.label} x={1372} y={g.y} label={g.label} />
        ))}
        <SectionMark x={956} y={372} label="1" sheet="S001" />
        <SectionMark x={1412} y={490} label="4" sheet="S002" />
      </g>
    </g>
  </svg>
);

const viewControls: { label: string; drawing: React.ReactNode }[] = [
  { label: "Detail level", drawing: <path d="M1 2h15v11H1z" fill="url(#checks)" /> },
  {
    label: "Visual style",
    drawing: <path d="M2 7l4-5h10v6l-4 5H2zM2 7h10v6M12 7l4-5" fill="#fff" />,
  },
  {
    label: "Sun path",
    drawing: (
      <>
        <circle cx="8" cy="7" r="4" fill="#ffe9a0" stroke="#d8961c" strokeWidth="1.500" />
        <path d="M8 0v2M1 7h2M3 2l2 2M13 2l-2 2M3 12l2-2" stroke="#d8961c" />
        <RedCross x={10} y={7} />
      </>
    ),
  },
  {
    label: "Shadows",
    drawing: (
      <>
        <circle cx="7" cy="6" r="4.500" fill="#dceefb" stroke="#4a86c0" />
        <path d="M2 13h7" stroke="#777" strokeWidth="2" />
        <RedCross x={10} y={7} />
      </>
    ),
  },
  {
    label: "Crop view",
    drawing: (
      <>
        <path d="M5 14V4h11M1 10h4M8 7h6" stroke={BLUE} strokeWidth="1.600" />
        <RedCross x={9} y={7} />
      </>
    ),
  },
  {
    label: "Crop region",
    drawing: (
      <>
        <path d="M5 14V4h7M1 10h4M8 7v6" stroke={BLUE} strokeWidth="1.600" />
        <circle cx="13" cy="6" r="3" fill="#dceefb" stroke="#3b7fc0" />
        <path d="M13 9v5" stroke="#3b7fc0" strokeWidth="2" />
      </>
    ),
  },
  {
    label: "Temporary hide",
    drawing: <path d="M1 4l4 5c2 3 5 2 5-1s4-3 5-1-1 4-3 3l-2-2M5 9l5-2M15 7l1-4-3-1" />,
  },
  {
    label: "Reveal hidden",
    drawing: (
      <>
        <circle cx="8" cy="6" r="3" fill="#dceefb" stroke="#3b97ea" />
        <path d="M8 9v5" stroke="#3b7fc0" strokeWidth="2" />
      </>
    ),
  },
  {
    label: "Temporary view properties",
    drawing: (
      <>
        <path d="M2 3h13v10H2z" strokeDasharray="2 1" strokeWidth="1.600" stroke="#111" />
        <circle cx="11" cy="10" r="3" fill="#fff" stroke="#111" />
      </>
    ),
  },
  {
    label: "Analytical model",
    drawing: (
      <>
        <path d="M1 13V6l4-3h8M5 3v10M9 3v10M1 8h10" />
        <path d="M3 8v6M7 8v6M1 10h9" stroke="#c8141b" />
        <circle cx="13" cy="6" r="3" fill="#ffd659" stroke="#c88a1a" />
      </>
    ),
  },
  {
    label: "Reveal constraints",
    drawing: (
      <>
        <path d="M1 1v5M16 1v5M1 3h15" />
        <path d="M1 12h8" strokeDasharray="2 1" />
        <path d="M10 8h6v5h-6zM11 8V6h4v2" fill="#666" />
      </>
    ),
  },
];

const NavigationBar = () => (
  <div className="absolute top-7 right-0 flex h-[118px] w-9 flex-col items-center rounded-md border-2 border-[#c0c0c0] bg-[#f4f4f4] py-[2px]">
    <button aria-label="Close navigation bar" className="mr-[2px] self-end">
      <svg width="9" height="9"><circle cx="4.500" cy="4.500" r="4.500" fill="#b5b5b5" /><path d="M3 3l3 3m0-3L3 6" stroke="#fff" /></svg>
    </button>
    <button aria-label="Steering wheel" className="mt-2">
      <svg width="26" height="24" fill="none" stroke="#9a9fa6">
        <path d="M10 1h9v9c0 5-4 9-9 9s-9-4-9-9 4-9 9-9z" fill="#e8ebee" strokeWidth="1.500" />
        <circle cx="10" cy="10" r="4.500" fill="#fff" />
        <path d="M7 13l-3 3" />
        <text x="13" y="23" stroke="none" className="fill-[#6d8fb3] font-['Liberation_Sans'] text-[9px] font-bold">2D</text>
      </svg>
    </button>
    <Caret className="mt-[5px] opacity-50" />
    <span className="mt-[5px] h-px w-7 bg-[#c4c4c4]" />
    <button aria-label="Zoom region" className="mt-2">
      <svg width="18" height="18">
        <path d="M1 1h12v12H1z" fill="#b7d3a5" stroke="#86ad70" />
        <circle cx="12" cy="11" r="3.500" fill="#f4f4f4" stroke="#8d8d8d" />
        <path d="M14 13l3 3" stroke="#8d8d8d" strokeWidth="2" />
      </svg>
    </button>
    <Caret className="mt-2 opacity-50" />
    <button aria-label="Navigation bar options" className="mt-auto mr-[2px] self-end">
      <svg width="9" height="9"><circle cx="4.500" cy="4.500" r="4.500" fill="#b5b5b5" /><path d="M2 4.500h5" stroke="#fff" strokeWidth="2" /></svg>
    </button>
  </div>
);

const Workspace = () => (
  <main className="mr-px flex min-w-0 grow flex-col border-t-2 border-l-2 border-[#6d6d6d] pb-[2px]">
    <div className="flex min-h-0 grow">
      <div className="relative min-w-0 grow overflow-hidden bg-white">
        <FloorPlan />
        <div className="absolute top-[7px] right-1 flex items-center gap-[6px]">
          <button aria-label="Minimize view">
            <svg width="12" height="12"><path d="M0.500 7.500h11v3H0.500z" fill="#fff" stroke={INK} /></svg>
          </button>
          <button aria-label="Restore view">
            <svg width="12" height="12" fill="none" stroke={INK}><path d="M3.500 3V0.500h8v8H9M0.500 3.500h8v8h-8zM3.500 6.500h2v2h-2z" /></svg>
          </button>
          <button aria-label="Close view">
            <svg width="12" height="12" fill="none" stroke={INK}><path d="M1 1h2.500L6 4l2.500-3H11v2L8 6l3 3v2H8.500L6 8l-2.500 3H1V9l3-3-3-3z" /></svg>
          </button>
        </div>
        <NavigationBar />
      </div>
      <div className="flex w-[17px] shrink-0 flex-col items-center bg-[#f0f0f0]">
        <button aria-label="Scroll up" className="flex h-[18px] shrink-0 items-center"><Chevron dir="up" /></button>
        <div className="mt-[386px] h-4 w-full shrink-0 bg-[#cdcdcd]" />
        <button aria-label="Scroll down" className="mt-auto flex h-[18px] items-center"><Chevron dir="down" /></button>
      </div>
    </div>
    <div className="flex h-[17px] shrink-0 items-center bg-[#f0f0f0] pr-5 pl-[27px]">
      <span className="w-[51px]">1 : 50</span>
      <div className="flex gap-1">
        {viewControls.map((item) => (
          <button key={item.label} aria-label={item.label}>
            <svg width="17" height="15" fill="none" stroke={INK} strokeWidth="1.100">
              {item.drawing}
            </svg>
          </button>
        ))}
      </div>
      <button aria-label="Scroll left" className="flex w-5 justify-center"><Chevron dir="left" /></button>
      <div className="flex h-full grow justify-center pr-2">
        <div className="h-full w-[17px] bg-[#cdcdcd]" />
      </div>
      <button aria-label="Scroll right"><Chevron dir="right" /></button>
    </div>
  </main>
);

// ---------- status bar ----------

const selectTools: { label: string; drawing: React.ReactNode }[] = [
  { label: "Select links", drawing: <><path d="M2 4h5v4H2zM7 6h4" stroke="#e09a17" strokeWidth="2" /><RedCross x={9} y={1} /><Cursor x={7} y={4} /></> },
  { label: "Select underlay elements", drawing: <><path d="M1 11l8-9v9zM1 14h8" stroke="#2a78c4" fill="#cfe6fb" /><RedCross x={9} y={1} /><Cursor x={7} y={4} /></> },
  { label: "Select pinned elements", drawing: <><path d="M3 1h8v3H9v3h2v3H2V7h2V4H3zM6 10v5" stroke="#a8481e" fill="#e98a4d" /><Cursor x={8} y={4} /></> },
  { label: "Select elements by face", drawing: <><path d="M1 4l7-2v11l-7 2z" stroke="#2a78c4" fill="#a9d4f8" /><RedCross x={9} y={1} /><Cursor x={7} y={4} /></> },
  { label: "Drag elements on selection", drawing: <><path d="M5 0v10M0 5h10M4 1h2M4 9h2M1 4v2M9 4v2" stroke="#222" strokeWidth="1.500" /><Cursor x={8} y={4} /></> },
];

const StatusBar = () => {
  const [exclude, setExclude] = useState(true);
  return (
    <footer className="flex h-6 shrink-0 items-center border-t border-[#8c8c8c] bg-[#d4d4d4] whitespace-nowrap">
      <p className="w-[901px] shrink-0 pl-[2px]">
        Click to select, TAB for alternates, CTRL adds, SHIFT unselects.
      </p>
      <button aria-label="Worksets" className="w-[26px]">
        <svg width="18" height="18" fill="#fff" stroke={BLUE} className="ml-[2px]">
          <path d="M2 7l3-1 3 1v9H2z" />
          <path d="M10 8h3v9h-3zM14 8h3v9h-3zM12 5v3M15 5v3" />
          <path d="M4 6V2h7v4M9 4l2 2 2-2" stroke="#2f8a2f" strokeWidth="1.800" fill="none" />
        </svg>
      </button>
      <label className="relative block">
        <span className="sr-only">Active workset</span>
        <select disabled className="block h-[22px] w-[204px] appearance-none bg-white opacity-100">
          <option></option>
        </select>
        <svg width="9" height="6" fill="none" stroke="#999" className="absolute top-2 right-[4px]"><path d="M0 0l4 4 4-4" /></svg>
      </label>
      <button className="ml-2 flex w-[54px] items-center gap-1">
        <svg width="16" height="18" fill="#c4c4c4" stroke="#8f8f8f"><path d="M4 1h10v3l-3 4v6H6l-4 3 5-8V4H4z" /></svg>
        :0
      </button>
      <button aria-label="Design options" className="w-[25px]">
        <svg width="16" height="16" fill="#fff" stroke={INK} strokeWidth="1.200"><path d="M1 1h14v14H1zM1 4h14M4 7h2M8 7h5M4 10h2M8 10h5M4 13h2M8 13h5" /></svg>
      </button>
      <button aria-label="Pick to edit" disabled className="w-6">
        <svg width="16" height="18" fill="#a6a6a6"><path d="M0 1h15v16H0z" /><path d="M4 9h7M8 5l4 4-4 4" stroke="#ddd" strokeWidth="1.500" fill="none" /></svg>
      </button>
      <label className="relative block">
        <span className="sr-only">Active design option</span>
        <select className="block h-[22px] w-[206px] appearance-none bg-white pl-[2px] outline-none">
          <option>Main Model</option>
        </select>
        <svg width="9" height="6" fill="none" stroke="#444" className="absolute top-2 right-[4px]"><path d="M0 0l4 4 4-4" /></svg>
      </label>
      <label className="relative ml-2 flex items-center gap-[3px]">
        <input
          type="checkbox"
          checked={exclude}
          onChange={(e) => setExclude(e.target.checked)}
          className="size-[15px] appearance-none border border-[#555] bg-white"
        />
        {exclude && (
          <svg width="15" height="15" fill="none" stroke="#2fa32f" strokeWidth="2.500" className="pointer-events-none absolute left-0"><path d="M3 7l3 4 6-8" /></svg>
        )}
        Exclude Options
      </label>
      <div className="mr-[65px] ml-auto flex items-center gap-[10px]">
        {selectTools.map((item) => (
          <button key={item.label} aria-label={item.label}>
            <svg width="16" height="17" fill="none">{item.drawing}</svg>
          </button>
        ))}
        <svg width="16" height="16" fill="none"><circle cx="8" cy="8" r="5" stroke="#adadad" strokeWidth="3.500" strokeDasharray="3 1" /></svg>
        <button className="flex items-center">
          <svg width="16" height="16" fill="#8d949e" stroke={INK}><path d="M1 1h14l-5 7v7H6V8z" /></svg>
          :0
        </button>
      </div>
    </footer>
  );
};

const App = () => {
  return (
    <div className="flex h-screen flex-col overflow-hidden bg-[#f0f0f0] font-['Open_Sans','Noto_Sans',sans-serif] text-[12px] text-black">
      <svg width="0" height="0" className="absolute">
        <defs>
          <pattern id="hatch" width="3" height="3" patternUnits="userSpaceOnUse">
            <path d="M0 0h3v3H0z" fill="#c9ccd1" />
            <path d="M0 3l3-3" stroke="#6a707a" strokeWidth="0.800" />
          </pattern>
          <pattern id="concrete" width="11" height="7" patternUnits="userSpaceOnUse">
            <path d="M0 0h11v7H0z" fill="#fff" />
            <path d="M1 2h1v1H1zM5 5h1v1H5zM8 1h1v1H8z" fill="#d8d8d8" />
          </pattern>
          <pattern id="checks" width="4" height="4" patternUnits="userSpaceOnUse">
            <path d="M0 0h4v4H0z" fill="#fff" />
            <path d="M0 0h2v2H0zM2 2h2v2H2z" fill="#888" />
          </pattern>
        </defs>
      </svg>

      <header className="shrink-0 bg-[#d4d4d4]">
        <div className="flex h-7 items-start justify-between">
          <QuickAccess />
          <h1 className="pt-[3px] whitespace-pre text-[#888]">
            Autodesk Revit 2018.2 - Not For Resale Version -     rst_basic_sample_project - Structural Plan: Foundation
          </h1>
          <InfoCenter />
        </div>
        <nav className="flex h-5 items-center text-[#333]">
          <a href="#file" className="ml-px flex h-full w-[45px] items-center justify-center bg-[#2a78b5] text-white">File</a>
          <a href="#architecture" className="ml-[3px] flex h-full w-[83px] items-center justify-center bg-[#f6f6f6] text-black">Architecture</a>
          <div className="flex gap-[17px] pl-[10px]">
            {tabs.map((tab) => (
              <a key={tab} href={`#${tab}`} className="whitespace-nowrap">{tab}</a>
            ))}
          </div>
          <button aria-label="Minimize ribbon" className="ml-[30px] flex items-center gap-1">
            <svg width="15" height="10" fill="#fff" stroke="#333"><rect x="1" y="1" width="13" height="8" rx="2" /><path d="M5 6l2.500-3L10 6z" fill="#333" /></svg>
            <Caret />
          </button>
        </nav>
      </header>

      <div className="flex h-24 shrink-0 border-b border-[#cfcfcf] bg-[#f6f6f6] text-[#333]">
        <div className="flex w-[58px] shrink-0 flex-col items-center border-r border-[#dadada] pt-[3px] pl-[2px]">
          <button className="flex h-[72px] w-11 flex-col items-center border border-[#0a62b5] bg-[#b5d4f1] pt-px leading-[15px]">
            <svg width="32" height="32">{icons.modify}</svg>
            <span className="mt-1">Modify</span>
          </button>
          <button className="mt-[2px] flex items-center gap-[6px] leading-[15px]">
            Select
            <WideCaret />
          </button>
        </div>
        {panels.map((panel) => (
          <section
            key={panel.title}
            className={`flex shrink-0 flex-col items-center border-r border-[#dadada] pt-[3px] last:border-r-0 ${panel.width}`}
          >
            <div className="flex justify-center">
              {panel.tools.map((tool) => (
                <ToolButton key={tool.label.join(" ")} tool={tool} />
              ))}
            </div>
            <h2 className="mt-[2px] flex items-center gap-[6px] leading-[15px]">
              {panel.title}
              {panel.arrow && <WideCaret />}
            </h2>
          </section>
        ))}
      </div>
      <div className="h-[26px] shrink-0 bg-[#f5f5f5]" />

      <div className="flex min-h-0 grow">
        <aside className="mr-[5px] flex w-[220px] shrink-0 flex-col">
          <PropertiesPalette />
          <ProjectBrowser />
        </aside>
        <Workspace />
      </div>

      <StatusBar />
      <div className="flex h-2 shrink-0 overflow-hidden bg-black text-white">
        <span className="w-12" />
        <span className="w-[344px] bg-[#333]" />
        <span className="mt-1 mr-[70px] ml-auto h-4 leading-4">14:15</span>
        <span className="mr-1 w-px bg-[#555]" />
      </div>
    </div>
  );
};

export default App;
